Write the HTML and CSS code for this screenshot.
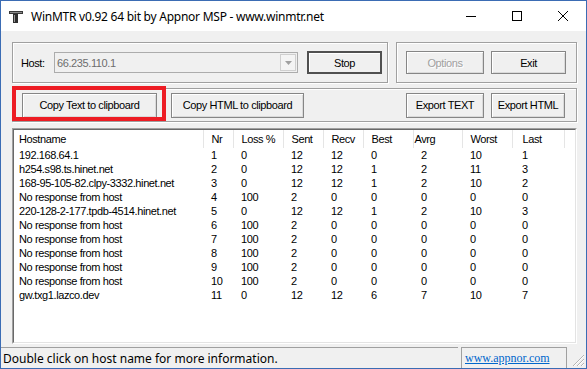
FILE: index.html
```html
<!DOCTYPE html>
<html lang="en">
  <head>
    <meta charset="UTF-8" />
    <title>WinMTR</title>
    <link rel="stylesheet" href="styles.css">
  </head>
  <body>
    <div class="window">
      <div class="titlebar">
        <svg class="app-icon" width="14" height="12" viewBox="0 0 14 12">
          <rect x="0" y="0" width="14" height="3" fill="#3a3a3a" />
          <rect x="1" y="1" width="12" height="1" fill="#8c8c8c" />
          <rect x="4" y="3" width="5" height="9" fill="#2e2e2e" />
          <rect x="5" y="4" width="1" height="7" fill="#9a9a9a" />
        </svg>
        <span class="title">WinMTR v0.92 64 bit by Appnor MSP - www.winmtr.net</span>
        <div class="caption">
          <span class="cap-btn">
            <svg width="10" height="10" viewBox="0 0 10 10"><line x1="0" y1="5.5" x2="10" y2="5.5" stroke="#000" /></svg>
          </span>
          <span class="cap-btn">
            <svg width="10" height="10" viewBox="0 0 10 10"><rect x="0.5" y="0.5" width="9" height="9" fill="none" stroke="#000" /></svg>
          </span>
          <span class="cap-btn">
            <svg width="10" height="10" viewBox="0 0 10 10"><path d="M0 0 L10 10 M10 0 L0 10" stroke="#000" /></svg>
          </span>
        </div>
      </div>

      <div class="client">
        <div class="top-row">
          <div class="group host-group">
            <label class="host-label">Host:</label>
            <div class="combo">
              <span class="combo-text">66.235.110.1</span>
              <span class="combo-arrow">
                <svg width="7" height="4" viewBox="0 0 7 4"><path d="M0 0 H7 L3.5 4 Z" fill="#a0a0a0" /></svg>
              </span>
            </div>
            <button class="btn btn-default stop-btn">Stop</button>
          </div>
          <div class="group action-group">
            <button class="btn options-btn" disabled>Options</button>
            <button class="btn exit-btn">Exit</button>
          </div>
        </div>

        <div class="group export-group">
          <div class="highlight"></div>
          <button class="btn copy-text">Copy Text to clipboard</button>
          <button class="btn copy-html">Copy HTML to clipboard</button>
          <div class="spacer"></div>
          <button class="btn export-text">Export TEXT</button>
          <button class="btn export-html">Export HTML</button>
        </div>

        <div class="list">
          <div class="list-inner">
            <table class="hops">
              <colgroup>
                <col class="c-host" /><col class="c-nr" /><col class="c-loss" /><col class="c-sent" /><col class="c-recv" />
                <col class="c-best" /><col class="c-avrg" /><col class="c-worst" /><col class="c-last" /><col />
              </colgroup>
              <thead>
                <tr>
                  <th class="host">Hostname</th><th>Nr</th><th>Loss %</th><th>Sent</th><th>Recv</th>
                  <th>Best</th><th class="avrg-head">Avrg</th><th>Worst</th><th class="last">Last</th><th class="filler"></th>
                </tr>
              </thead>
              <tbody>
                <tr><td class="host">192.168.64.1</td><td>1</td><td>0</td><td>12</td><td>12</td><td>0</td><td>2</td><td>10</td><td class="last">1</td><td></td></tr>
                <tr><td class="host">h254.s98.ts.hinet.net</td><td>2</td><td>0</td><td>12</td><td>12</td><td>1</td><td>2</td><td>11</td><td class="last">3</td><td></td></tr>
                <tr><td class="host">168-95-105-82.clpy-3332.hinet.net</td><td>3</td><td>0</td><td>12</td><td>12</td><td>1</td><td>2</td><td>10</td><td class="last">2</td><td></td></tr>
                <tr><td class="host">No response from host</td><td>4</td><td>100</td><td>2</td><td>0</td><td>0</td><td>0</td><td>0</td><td class="last">0</td><td></td></tr>
                <tr><td class="host">220-128-2-177.tpdb-4514.hinet.net</td><td>5</td><td>0</td><td>12</td><td>12</td><td>1</td><td>2</td><td>10</td><td class="last">3</td><td></td></tr>
                <tr><td class="host">No response from host</td><td>6</td><td>100</td><td>2</td><td>0</td><td>0</td><td>0</td><td>0</td><td class="last">0</td><td></td></tr>
                <tr><td class="host">No response from host</td><td>7</td><td>100</td><td>2</td><td>0</td><td>0</td><td>0</td><td>0</td><td class="last">0</td><td></td></tr>
                <tr><td class="host">No response from host</td><td>8</td><td>100</td><td>2</td><td>0</td><td>0</td><td>0</td><td>0</td><td class="last">0</td><td></td></tr>
                <tr><td class="host">No response from host</td><td>9</td><td>100</td><td>2</td><td>0</td><td>0</td><td>0</td><td>0</td><td class="last">0</td><td></td></tr>
                <tr><td class="host">No response from host</td><td>10</td><td>100</td><td>2</td><td>0</td><td>0</td><td>0</td><td>0</td><td class="last">0</td><td></td></tr>
                <tr><td class="host">gw.txg1.lazco.dev</td><td>11</td><td>0</td><td>12</td><td>12</td><td>6</td><td>7</td><td>10</td><td class="last">7</td><td></td></tr>
              </tbody>
            </table>
          </div>
        </div>
      </div>

      <div class="statusbar">
        <div class="panel panel-main">Double click on host name for more information.</div>
        <div class="panel panel-link"><a href="#">www.appnor.com</a></div>
        <svg class="grip" width="13" height="13" viewBox="0 0 13 13">
          <path d="M12 1 L1 12 M12 5 L5 12 M12 9 L9 12" stroke="#b4b4b4" />
          <path d="M12 2 L2 12 M12 6 L6 12 M12 10 L10 12" stroke="#fff" />
        </svg>
      </div>
    </div>
  </body>
</html>
```

FILE: styles.css
```css
* {
  margin: 0;
  padding: 0;
  box-sizing: border-box;
}

body {
  background: #1d3b6b;
}

.window {
  width: 587px;
  height: 369px;
  border: 1px solid #3b6cb4;
  background: #f0f0f0;
  display: flex;
  flex-direction: column;
  font-family: "Liberation Sans", Arial, sans-serif;
  font-size: 11px;
  letter-spacing: -0.4px;
  color: #000;
}

/* title bar */
.titlebar {
  height: 30px;
  flex: none;
  background: #fff;
  display: flex;
  align-items: center;
  padding-left: 8px;
  font-family: "Noto Sans", sans-serif;
  font-size: 12px;
  letter-spacing: 0;
}

.app-icon {
  margin-right: 8px;
  margin-top: 1px;
}

.title {
  flex: 1;
  color: #000;
  letter-spacing: -0.25px;
}

.caption {
  display: flex;
  height: 30px;
}

.cap-btn {
  width: 46px;
  height: 30px;
  display: flex;
  align-items: center;
  justify-content: center;
}

/* client area */
.client {
  flex: 1;
  padding: 11px 9px 0 11px;
  display: flex;
  flex-direction: column;
}

.top-row {
  display: flex;
  gap: 8px;
  height: 41px;
  margin-bottom: 5px;
}

.group {
  border: 1px solid #a0a0a0;
  box-shadow: inset 1px 1px 0 #fff, 1px 1px 0 #fff;
  display: flex;
  align-items: center;
}

.host-group {
  width: 376px;
  padding-left: 8px;
}

.host-label {
  width: 33px;
}

.combo {
  width: 244px;
  height: 21px;
  border: 1px solid #acacac;
  background: #f0f0f0;
  display: flex;
  align-items: center;
  padding: 0 1px 0 2px;
}

.combo-text {
  flex: 1;
  color: #6d6d6d;
}

.combo-arrow {
  width: 16px;
  height: 17px;
  border: 1px solid #cfcfcf;
  background: #f4f4f4;
  display: flex;
  align-items: center;
  justify-content: center;
}

.btn {
  height: 23px;
  border: 1px solid #868686;
  background: #f0f0f0;
  box-shadow: inset 1px 1px 0 #fff, inset -1px -1px 0 #dadada;
  font-family: inherit;
  font-size: 11px;
  letter-spacing: -0.4px;
  color: #000;
}

.btn-default {
  border: 2px solid #505050;
  box-shadow: inset 1px 1px 0 #fff;
}

.btn:disabled {
  color: #a0a0a0;
  text-shadow: 1px 1px 0 #fff;
}

.stop-btn {
  width: 75px;
  margin-left: 9px;
}

.action-group {
  flex: 1;
  padding-left: 9px;
  gap: 7px;
}

.options-btn {
  width: 78px;
}

.exit-btn {
  width: 75px;
}

.export-group {
  position: relative;
  height: 34px;
  margin-bottom: 6px;
  padding-left: 9px;
  padding-right: 11px;
}

.export-group .btn {
  height: 25px;
}

.copy-text {
  width: 135px;
}

.copy-html {
  width: 133px;
  margin-left: 14px;
}

.spacer {
  flex: 1;
}

.export-text {
  width: 78px;
}

.export-html {
  width: 74px;
  margin-left: 7px;
}

/* red annotation box around the copy button */
.highlight {
  position: absolute;
  left: -1px;
  top: -3px;
  width: 154px;
  height: 35px;
  border: 4px solid #ed1c24;
}

/* hop list */
.list {
  flex: 1;
  border: 1px solid;
  border-color: #a0a0a0 #fff #fff #a0a0a0;
  display: flex;
}

.list-inner {
  flex: 1;
  border: 1px solid;
  border-color: #696969 #e3e3e3 #e3e3e3 #696969;
  background: #fff;
  overflow: hidden;
}

.hops {
  width: 100%;
  table-layout: fixed;
  border-collapse: collapse;
}

.c-host { width: 189px; }
.c-nr { width: 30px; }
.c-loss { width: 50px; }
.c-sent { width: 40px; }
.c-recv { width: 40px; }
.c-best { width: 50px; }
.c-avrg { width: 49px; }
.c-worst { width: 50px; }
.c-last { width: 52px; }

.hops th {
  height: 18px;
  font-weight: normal;
  text-align: left;
  padding-left: 8px;
  border-right: 1px solid #e5e5e5;
  white-space: nowrap;
}

.hops th.filler {
  border-right: none;
}

.hops td {
  height: 14px;
  line-height: 14px;
  padding-left: 8px;
  white-space: nowrap;
  overflow: hidden;
}

.hops .host {
  padding-left: 5px;
}

.hops .last {
  padding-left: 10px;
}

.hops th.avrg-head {
  padding-left: 1px;
}

/* status bar */
.statusbar {
  height: 24px;
  flex: none;
  display: flex;
  padding-top: 3px;
  font-family: "Noto Sans", sans-serif;
  font-size: 12px;
  letter-spacing: 0;
}

.panel {
  border-top: 1px solid #a0a0a0;
  display: flex;
  align-items: center;
}

.panel-main {
  width: 457px;
  padding-left: 2px;
}

.panel-link {
  width: 106px;
  margin-left: 3px;
  border-left: 1px solid #a0a0a0;
  border-right: 1px solid #a0a0a0;
  padding-left: 3px;
}

.panel-link a {
  font-family: "Liberation Serif", "Times New Roman", serif;
  font-size: 12px;
  color: #0066cc;
}

.grip {
  margin-left: auto;
  margin-top: 7px;
  margin-right: 1px;
}
```
